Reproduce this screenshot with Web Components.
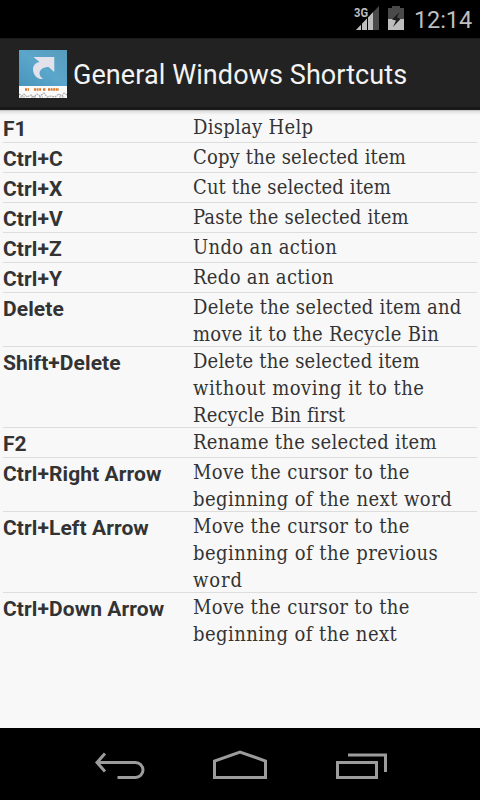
<!DOCTYPE html>
<html lang="en">
<head>
<meta charset="utf-8">
<title>General Windows Shortcuts</title>
<style>
    body {
        margin: 0;
        background: #000;
    }
</style>
</head>
<body>
<phone-screen>
    <status-bar slot="status" time="12:14"></status-bar>
    <action-bar slot="header">General Windows Shortcuts</action-bar>
    <shortcut-list></shortcut-list>
    <nav-bar slot="nav"></nav-bar>
</phone-screen>

<script>
class PhoneScreen extends HTMLElement {
    constructor() {
        super();
        this.attachShadow({ mode: 'open' });
        this.shadowRoot.innerHTML = `
            <style>
                :host {
                    display: flex;
                    flex-direction: column;
                    width: 480px;
                    height: 800px;
                    overflow: hidden;
                    font-family: Roboto, sans-serif;
                }
                main {
                    flex: 1;
                    min-height: 0;
                    overflow: hidden;
                    background: linear-gradient(#b4b4b4 0, #dcdcdc 1px, #ececec 3px, #f8f8f8 5px);
                }
            </style>
            <slot name="status"></slot>
            <slot name="header"></slot>
            <main><slot></slot></main>
            <slot name="nav"></slot>
        `;
    }
}

class StatusBar extends HTMLElement {
    constructor() {
        super();
        this.attachShadow({ mode: 'open' });
    }

    connectedCallback() {
        this.shadowRoot.innerHTML = `
            <style>
                :host {
                    display: flex;
                    justify-content: flex-end;
                    align-items: center;
                    height: 38px;
                    padding-right: 8px;
                    box-sizing: border-box;
                    flex: none;
                    background: #000;
                    color: #bebebe;
                }
                .signal {
                    margin-right: 9px;
                }
                .time {
                    width: 58px;
                    margin-left: 10px;
                    padding-top: 2px;
                    font-size: 23.500px;
                    letter-spacing: -.1px;
                    line-height: 36px;
                    white-space: nowrap;
                }
                text {
                    font: bold 13.500px Roboto, sans-serif;
                }
            </style>
            <svg class="signal" width="26" height="38" viewBox="0 0 26 38">
                <path d="M3 30L26 6V30Z" fill="#4a4a4a"/>
                <path d="M3 30L20 12.300V30Z" fill="#bebebe"/>
                <path d="M8.500 18V30M14.500 14V30" stroke="#000" stroke-width="1"/>
                <text x="1" y="17" textLength="14" lengthAdjust="spacingAndGlyphs" fill="#bebebe" stroke="#000" stroke-width="2" paint-order="stroke">3G</text>
            </svg>
            <svg width="16" height="38" viewBox="0 0 16 38">
                <path d="M0 8H4V6H12V8H16V19H0Z" fill="#4a4a4a"/>
                <path d="M0 19H16V30H0Z" fill="#bebebe"/>
                <path d="M11.500 12L4 19.500L8 20.500L5 27L12.500 19L9 17.500Z" fill="#1c1c1c"/>
            </svg>
            <span class="time"></span>
        `;
        this.shadowRoot.querySelector('.time').textContent = this.getAttribute('time');
    }
}

class ActionBar extends HTMLElement {
    constructor() {
        super();
        this.attachShadow({ mode: 'open' });
        this.shadowRoot.innerHTML = `
            <style>
                :host {
                    display: flex;
                    align-items: center;
                    gap: 6px;
                    height: 72px;
                    padding-left: 19px;
                    box-sizing: border-box;
                    flex: none;
                    background: #222;
                    border-top: 1px solid #1b1b1b;
                    border-bottom: 3px solid #181818;
                    color: #f3f3f3;
                }
                svg {
                    display: block;
                    margin-top: 1px;
                }
                h1 {
                    margin: 3px 0 0;
                    font-size: 27px;
                    font-weight: 400;
                    letter-spacing: .08px;
                    line-height: 32px;
                    white-space: nowrap;
                }
            </style>
            <svg width="48" height="48" viewBox="0 0 48 48">
                <defs>
                    <linearGradient id="sky" x1="0" y1="1" x2="1" y2="0">
                        <stop offset="0" stop-color="#4994bc"/>
                        <stop offset=".5" stop-color="#5ba6cb"/>
                        <stop offset="1" stop-color="#579bbb"/>
                    </linearGradient>
                </defs>
                <path d="M0 0H48V36H0Z" fill="url(#sky)"/>
                <path d="M0 36H48V48H0Z" fill="#fafafa"/>
                <path d="M14.500 7H35.300V22L29.500 17C25 17 21 19 20.500 23C20.500 26 22 27.500 24.500 28.500L21.500 29C17 28 14 24 14 19C14 16 16 13 20.500 12Z" fill="#e3e2ea"/>
                <!-- caption strip, too small to be legible -->
                <path d="M6 39.500H10M15 39.500H22M24 39.500H27M29 39.500H40" stroke="#d9772b" stroke-width="2.500" stroke-dasharray="2 .6"/>
                <path d="M0 44L3 46L5 44L8 47L12 45L15 47L18 44L21 46L25 43L28 47L32 46L36 47L40 44L43 46L45 43L48 45M1 47H6M12 47H17M20 47H24M40 47H46" fill="none" stroke="#aaa" stroke-width="1.200" stroke-dasharray="2 .8"/>
            </svg>
            <h1><slot></slot></h1>
        `;
    }
}

class ShortcutRow extends HTMLElement {
    constructor() {
        super();
        this.attachShadow({ mode: 'open' });
        this.shadowRoot.innerHTML = `
            <style>
                :host {
                    display: grid;
                    grid-template-columns: 190px 1fr;
                    min-height: 30px;
                    box-sizing: border-box;
                    border-bottom: 1px solid #ddd;
                    color: #333;
                }
                :host(:last-child) {
                    border-bottom: 0;
                }
                .keys {
                    padding-top: 3px;
                    font-size: 21px;
                    font-weight: 700;
                    letter-spacing: .09px;
                    line-height: 26px;
                    height: 26px;
                    white-space: nowrap;
                }
                .action {
                    font-family: "DejaVu Serif Condensed", "DejaVu Serif", serif;
                    font-stretch: condensed;
                    font-size: 20px;
                    line-height: 27px;
                    padding-top: 1px;
                    margin-bottom: -2px;
                    white-space: nowrap;
                }
                ::slotted(.line) {
                    display: block;
                }
            </style>
            <div class="keys"><slot name="keys"></slot></div>
            <div class="action"><slot></slot></div>
        `;
    }
}

class ShortcutList extends HTMLElement {
    constructor() {
        super();
        this.attachShadow({ mode: 'open' });
        // keys, then each line of the action with its tracking in px
        this.shortcuts = [
            ['F1', ['Display Help', .28]],
            ['Ctrl+C', ['Copy the selected item', .17]],
            ['Ctrl+X', ['Cut the selected item', .11]],
            ['Ctrl+V', ['Paste the selected item', .16]],
            ['Ctrl+Z', ['Undo an action', .36]],
            ['Ctrl+Y', ['Redo an action', .32]],
            ['Delete', ['Delete the selected item and', .24], ['move it to the Recycle Bin', .26]],
            ['Shift+Delete', ['Delete the selected item', .18], ['without moving it to the', .48], ['Recycle Bin first', .1]],
            ['F2', ['Rename the selected item', .27]],
            ['Ctrl+Right Arrow', ['Move the cursor to the', .36], ['beginning of the next word', .46]],
            ['Ctrl+Left Arrow', ['Move the cursor to the', .36], ['beginning of the previous', .45], ['word', .9]],
            ['Ctrl+Down Arrow', ['Move the cursor to the', .36], ['beginning of the next', .43]]
        ];
    }

    connectedCallback() {
        this.shadowRoot.innerHTML = `
            <style>
                :host {
                    display: block;
                    padding: 3px 3px 0;
                }
            </style>
            ${this.shortcuts.map(([keys, ...lines]) => `
                <shortcut-row>
                    <span slot="keys">${keys}</span>
                    ${lines.map(([text, tracking]) => `<span class="line" style="letter-spacing: ${tracking}px">${text}</span>`).join(' ')}
                </shortcut-row>
            `).join('')}
        `;
    }
}

class NavBar extends HTMLElement {
    constructor() {
        super();
        this.attachShadow({ mode: 'open' });
        this.shadowRoot.innerHTML = `
            <style>
                :host {
                    display: flex;
                    justify-content: center;
                    height: 72px;
                    flex: none;
                    background: #000;
                }
                svg {
                    width: 120px;
                    height: 72px;
                    fill: none;
                    stroke: #9c9c9c;
                    stroke-width: 3;
                }
            </style>
            <svg viewBox="60 728 120 72">
                <path d="M97 762.500H135.500A7.500 7.500 0 0 1 135.500 777.500H117.500M105 753.500L97 762.500L105 771.500"/>
            </svg>
            <svg viewBox="180 728 120 72">
                <path d="M214.500 777.500V761L240 752L265.500 761V777.500Z"/>
            </svg>
            <svg viewBox="300 728 120 72">
                <path d="M337.500 762.500H376.500V777.500H337.500ZM348 755H385.500V772"/>
            </svg>
        `;
    }
}

customElements.define('phone-screen', PhoneScreen);
customElements.define('status-bar', StatusBar);
customElements.define('action-bar', ActionBar);
customElements.define('shortcut-row', ShortcutRow);
customElements.define('shortcut-list', ShortcutList);
customElements.define('nav-bar', NavBar);
</script>
</body>
</html>
